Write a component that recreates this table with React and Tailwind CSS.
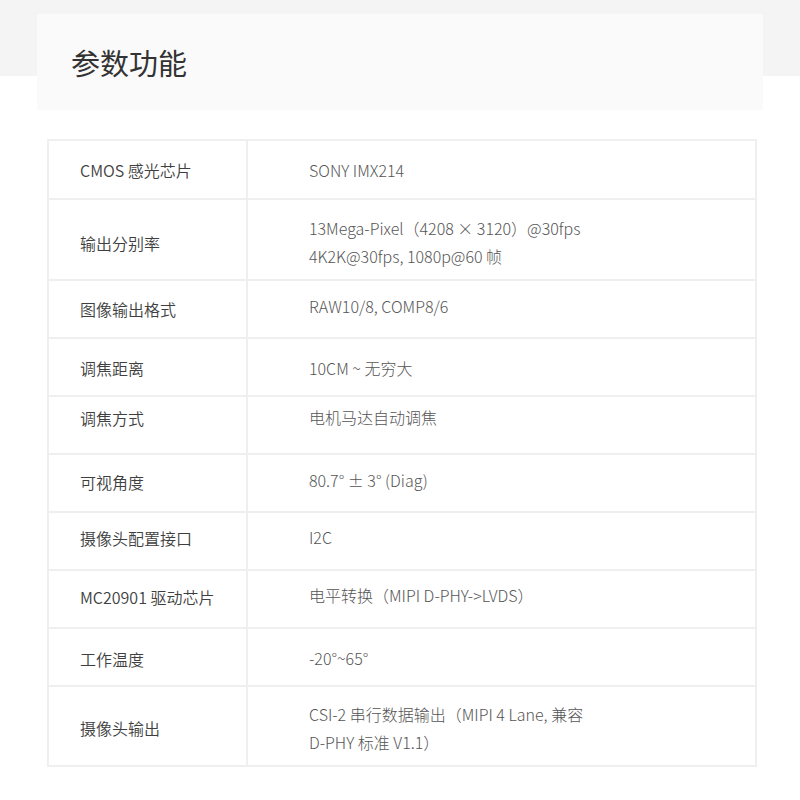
// App.jsx
const rows = [
  { h: 'h-[57px]', label: 'CMOS 感光芯片', lp: 'pt-[15px]', value: ['SONY IMX214'], rp: 'pt-[15px]' },
  {
    h: 'h-[81px]',
    label: '输出分别率',
    lp: 'pt-[29px]',
    value: ['13Mega-Pixel（4208 × 3120）@30fps', '4K2K@30fps, 1080p@60 帧'],
    rp: 'pt-[14px]',
  },
  { h: 'h-[58px]', label: '图像输出格式', lp: 'pt-[14px]', value: ['RAW10/8, COMP8/6'], rp: 'pt-[11px]' },
  { h: 'h-[58px]', label: '调焦距离', lp: 'pt-[15px]', value: ['10CM ~ 无穷大'], rp: 'pt-[15px]' },
  { h: 'h-[58px]', label: '调焦方式', lp: 'pt-[7px]', value: ['电机马达自动调焦'], rp: 'pt-[6px]' },
  { h: 'h-[58px]', label: '可视角度', lp: 'pt-[13px]', value: ['80.7° ± 3° (Diag)'], rp: 'pt-[11px]' },
  { h: 'h-[58px]', label: '摄像头配置接口', lp: 'pt-[11px]', value: ['I2C'], rp: 'pt-[10px]' },
  { h: 'h-[58px]', label: 'MC20901 驱动芯片', lp: 'pt-[12px]', value: ['电平转换（MIPI D-PHY->LVDS）'], rp: 'pt-[10px]' },
  { h: 'h-[58px]', label: '工作温度', lp: 'pt-[16px]', value: ['-20°~65°'], rp: 'pt-[15px]' },
  {
    h: 'h-[80px]',
    label: '摄像头输出',
    lp: 'pt-[27px]',
    value: ['CSI-2 串行数据输出（MIPI 4 Lane, 兼容', 'D-PHY 标准 V1.1）'],
    rp: 'pt-[13px]',
  },
];

function SpecRow({ row }) {
  return (
    <div className={`flex border-t-2 border-[#efefef] first:border-t-0 ${row.h}`}>
      <div
        className={`w-[199px] shrink-0 border-r-2 border-[#efefef] pl-[31px] text-[16px] leading-[28px] font-[350] text-[#3f3f3f] ${row.lp}`}
      >
        {row.label}
      </div>
      <div className={`flex-1 pl-[61px] text-[16px] leading-[28px] font-light text-[#555] ${row.rp}`}>
        {row.value.map((line) => (
          <div key={line}>{line}</div>
        ))}
      </div>
    </div>
  );
}

export default function App() {
  return (
    <div className="min-h-[800px] bg-white bg-[linear-gradient(to_bottom,#f4f4f4_76px,#ffffff_76px)] pt-[14px] font-['Noto_Sans_CJK_SC','Noto_Sans',sans-serif]">
      <div className="mx-[37px] flex h-[96px] items-center bg-[#fafafa] pl-[34px]">
        <h1 className="text-[29px] leading-none text-[#333]">参数功能</h1>
      </div>

      <div className="ml-[47px] mt-[29px] w-[710px] border-2 border-[#efefef]">
        {rows.map((row) => (
          <SpecRow key={row.label} row={row} />
        ))}
      </div>
    </div>
  );
}
